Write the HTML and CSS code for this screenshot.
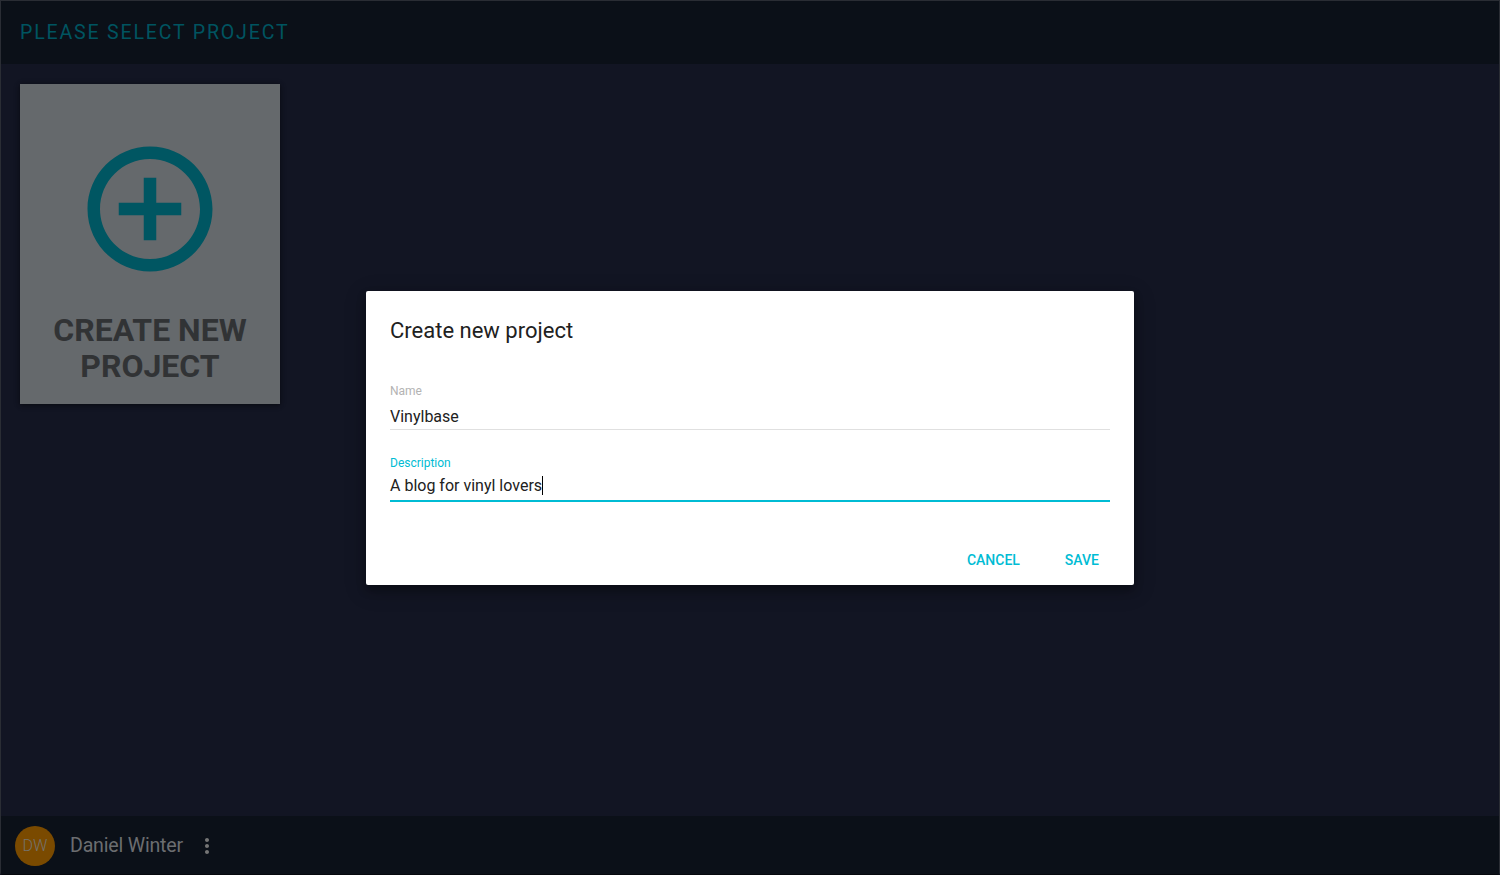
FILE: index.html
```html
<!DOCTYPE html>
<html lang="en">
<head>
<meta charset="utf-8">
<title>Create new project</title>
<link rel="stylesheet" href="styles.css">
</head>
<body>
<div class="app">
  <header class="topbar"><h1 class="topbar-title">PLEASE SELECT PROJECT</h1></header>
  <main class="projects">
    <button class="card">
      <svg class="card-icon" viewBox="0 0 24 24"><path d="M13 7h-2v4H7v2h4v4h2v-4h4v-2h-4V7zm-1-5C6.480 2 2 6.480 2 12s4.480 10 10 10 10-4.480 10-10S17.520 2 12 2zm0 18c-4.410 0-8-3.590-8-8s3.590-8 8-8 8 3.590 8 8-3.590 8-8 8z"/></svg>
      <span class="card-label">CREATE NEW<br>PROJECT</span>
    </button>
  </main>
  <footer class="userbar">
    <span class="avatar">DW</span>
    <span class="username">Daniel Winter</span>
    <svg class="more" viewBox="0 0 24 24"><path d="M12 8c1.100 0 2-.9 2-2s-.9-2-2-2-2 .9-2 2 .9 2 2 2zm0 2c-1.100 0-2 .9-2 2s.9 2 2 2 2-.9 2-2-.9-2-2-2zm0 6c-1.100 0-2 .9-2 2s.9 2 2 2 2-.9 2-2-.9-2-2-2z"/></svg>
  </footer>
</div>
<div class="overlay">
  <section class="dialog">
    <h2 class="dialog-title">Create new project</h2>
    <div class="field">
      <label class="field-label">Name</label>
      <div class="field-value">Vinylbase</div>
    </div>
    <div class="field field-active">
      <label class="field-label">Description</label>
      <div class="field-value">A blog for vinyl lovers<span class="caret"></span></div>
    </div>
    <div class="actions">
      <button class="action">CANCEL</button>
      <button class="action">SAVE</button>
    </div>
  </section>
</div>
</body>
</html>
```
FILE: styles.css
```css
* { box-sizing: border-box; }
body { margin: 0; font-family: Roboto, sans-serif; background: #121523; }
button { border: 0; background: none; font: inherit; padding: 0; }
.app { height: 875px; display: flex; flex-direction: column; border: 1px solid #2a2d34; border-bottom-color: #06080d; border-radius: 0 0 3px 3px; }
.topbar { height: 63px; background: #0b1018; padding: 0 19px; display: flex; align-items: center; }
.topbar-title { margin: 0; font-size: 19.6px; line-height: 24px; font-weight: 400; letter-spacing: 1.8px; color: #005460; }
.projects { flex: 1; padding: 20px 19px; }
.card { width: 260px; height: 320px; display: flex; flex-direction: column; align-items: center; padding-top: 50px; background: #65696c; box-shadow: 0 1px 6px rgba(0,0,0,.3), 0 1px 4px rgba(0,0,0,.3); }
.card-icon { width: 150px; height: 150px; fill: #005662; }
.card-label { margin-top: 28px; font-size: 32px; line-height: 36px; font-weight: 700; color: #313335; text-align: center; }
.userbar { height: 58px; background: #0b1018; display: flex; align-items: center; padding: 1px 0 0 14px; }
.avatar { width: 40px; height: 40px; border-radius: 50%; background: #7a4a00; color: #75736c; font-size: 16px; font-weight: 300; line-height: 40px; text-align: center; }
.username { margin-left: 15px; font-size: 19.6px; line-height: 24px; font-weight: 400; letter-spacing: -.2px; color: #6b6d70; }
.more { width: 24px; height: 24px; margin-left: 12px; fill: #757575; }
.overlay { position: absolute; inset: 0; display: flex; align-items: flex-start; justify-content: center; padding-top: 291px; }
.dialog { width: 768px; height: 294px; padding: 24px 24px 0; background: #fff; border-radius: 2px; box-shadow: 0 5px 22px rgba(0,0,0,.22), 0 5px 10px rgba(0,0,0,.3); }
.dialog-title { margin: 0 0 35px; font-size: 22px; line-height: 32px; font-weight: 400; color: #212121; }
.field { height: 72px; }
.field-label { display: block; height: 18px; font-size: 12px; line-height: 18px; color: #b3b3b3; }
.field-value { height: 30px; padding-top: 7px; font-size: 16px; line-height: 20px; color: #212121; border-bottom: 1px solid #e0e0e0; }
.field-active .field-label { color: #00bcd4; }
.field-active .field-value { padding-top: 4px; border-bottom: 2px solid #00bcd4; }
.caret { display: inline-block; width: 1px; height: 19px; background: #000; vertical-align: -4px; }
.actions { display: flex; justify-content: flex-end; gap: 45px; padding: 16px 11px 0 0; }
.action { font-size: 14px; line-height: 36px; font-weight: 500; color: #00bcd4; }
```
